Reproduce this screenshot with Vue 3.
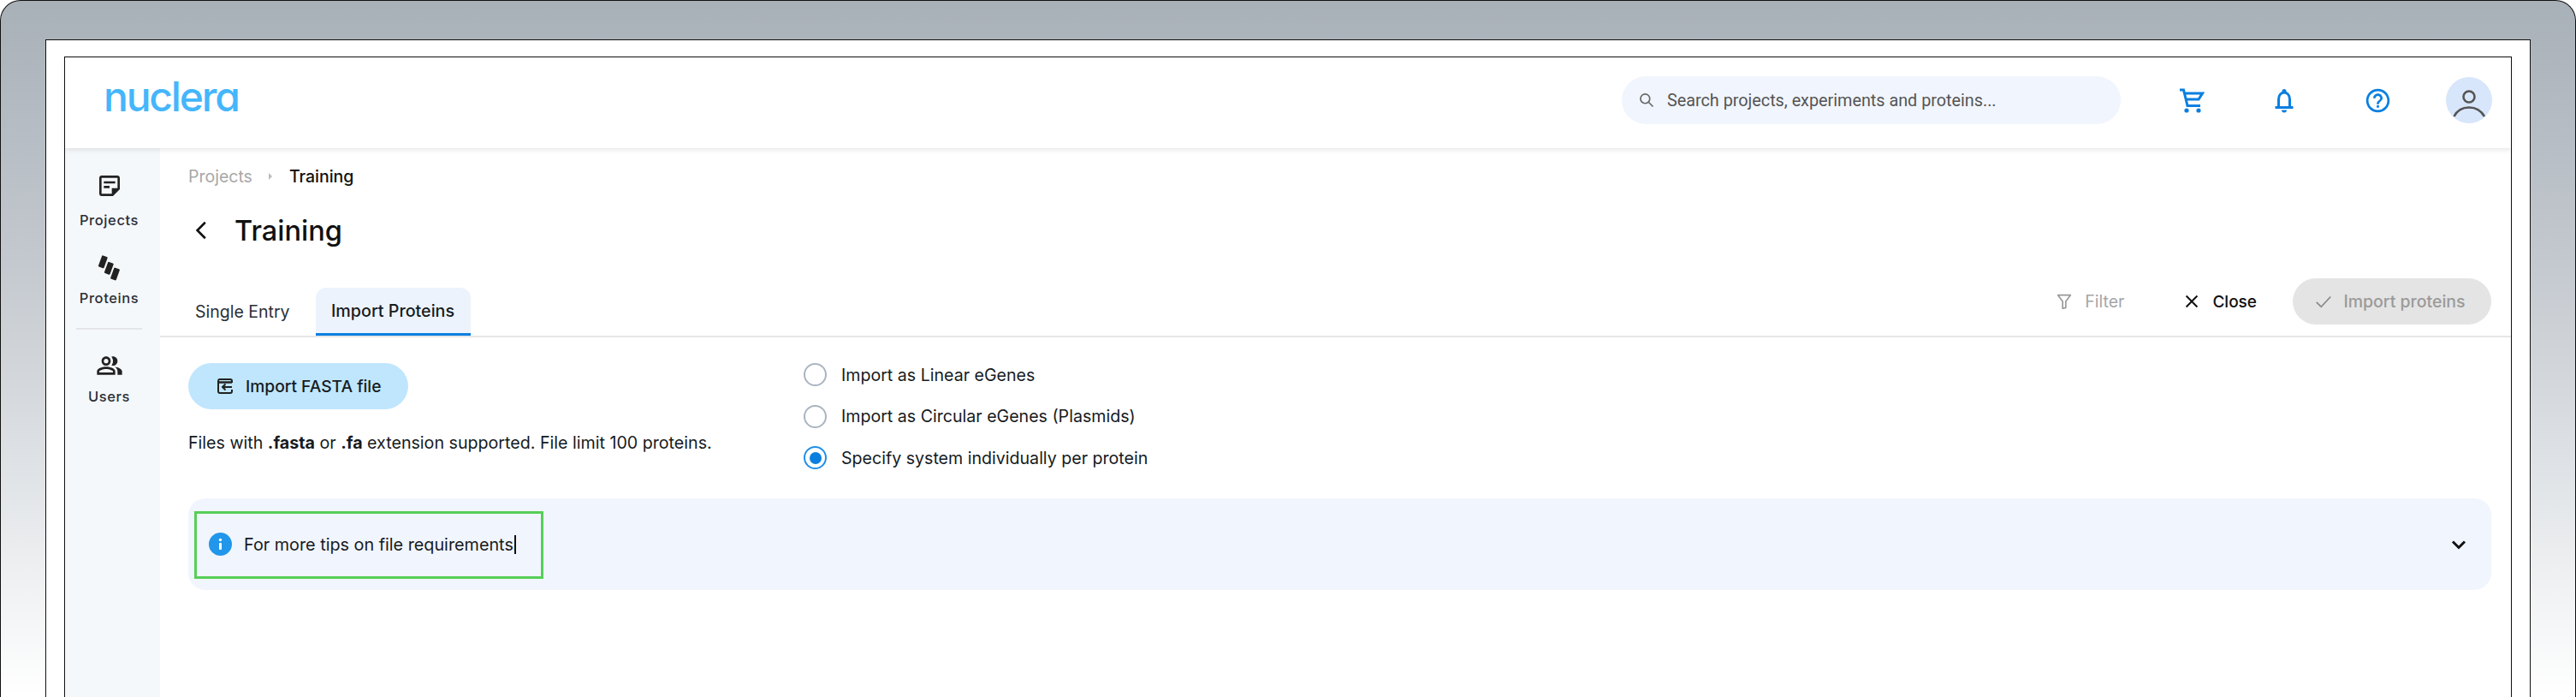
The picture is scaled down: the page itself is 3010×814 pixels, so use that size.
<script setup>
const radios = [
  { label: 'Import as Linear eGenes', on: false },
  { label: 'Import as Circular eGenes (Plasmids)', on: false },
  { label: 'Specify system individually per protein', on: true }
]
</script>

<template>
  <div class="shell">
    <div class="frame">
      <div class="app">
        <header class="topbar">
          <div class="logo">nuclera</div>
          <div class="search">
            <svg class="search-ico" viewBox="0 0 24 24" fill="none" stroke="#666" stroke-width="2"><circle cx="10" cy="10" r="6.5"/><path d="M15 15l6 6"/></svg>
            <span>Search projects, experiments and proteins...</span>
          </div>
          <div class="top-icons">
            <svg class="ti" viewBox="-3 -2.500 32 32" fill="none" stroke="#0a7fe0" stroke-width="3">
              <path d="M0 1.500h4.500L9 20h15M6 5.500h20.500L22 12.500H8"/>
              <circle cx="8" cy="25.500" r="2.600" fill="#0a7fe0" stroke="none"/>
              <circle cx="22" cy="25.500" r="2.600" fill="#0a7fe0" stroke="none"/>
            </svg>
            <svg class="ti" viewBox="-4.500 -2 32 32" fill="none" stroke="#0a7fe0" stroke-width="3">
              <path d="M5 22V13c0-5 3-8 6.500-8s6.500 3 6.500 8v9M1 22.500h21"/>
              <circle cx="11.500" cy="3.500" r="2.500" fill="#0a7fe0" stroke="none"/>
              <path d="M8.500 25.500h6a3 3 0 0 1-6 0z" fill="#0a7fe0" stroke="none"/>
            </svg>
            <svg class="ti help" viewBox="0 0 24 24" fill="#0a7fe0"><path d="M11 18h2v-2h-2v2zm1-16C6.480 2 2 6.480 2 12s4.480 10 10 10 10-4.480 10-10S17.520 2 12 2zm0 18c-4.410 0-8-3.590-8-8s3.590-8 8-8 8 3.590 8 8-3.590 8-8 8zm0-14c-2.210 0-4 1.790-4 4h2c0-1.100.9-2 2-2s2 .9 2 2c0 2-3 1.750-3 5h2c0-2.250 3-2.500 3-5 0-2.210-1.790-4-4-4z"/></svg>
            <div class="avatar">
              <svg viewBox="0 0 54 54" fill="none" stroke="#555" stroke-width="2.600"><circle cx="27" cy="23" r="6.500"/><path d="M9.500 46C13 39 20 35.500 27 35.500S41 39 45 46"/></svg>
            </div>
          </div>
        </header>

        <div class="body">
          <aside class="sidebar">
            <div class="nav-item nav-projects">
              <svg class="nav-ico" viewBox="0 0 24 24" fill="#222"><path d="M19 5v9h-5v5H5V5h14m0-2H5c-1.100 0-2 .9-2 2v14c0 1.100.9 2 2 2h10l6-6V5c0-1.100-.9-2-2-2zm-7 11H7v-2h5v2zm5-4H7V8h10v2z"/></svg>
              <span>Projects</span>
            </div>
            <div class="nav-item nav-proteins">
              <svg class="nav-ico" viewBox="0 0 32 32" fill="#222">
                <rect x="5.800" y="1.800" width="7" height="14" rx="1.200" transform="rotate(20 9.300 8.800)"/>
                <rect x="12.800" y="9.300" width="7" height="14" rx="1.200" transform="rotate(20 16.300 16.300)"/>
                <rect x="20" y="16" width="7" height="14" rx="1.200" transform="rotate(20 23.500 23)"/>
              </svg>
              <span>Proteins</span>
            </div>
            <div class="nav-div"></div>
            <div class="nav-item nav-users">
              <svg class="nav-ico" viewBox="0 0 24 24" fill="#222"><path d="M16.670 13.130C18.040 14.060 19 15.320 19 17v3h4v-3c0-2.180-3.570-3.470-6.330-3.870zM15 12c2.210 0 4-1.790 4-4s-1.790-4-4-4c-.47 0-.91.1-1.330.24C14.500 5.270 15 6.580 15 8s-.5 2.730-1.330 3.760C14.090 11.900 14.530 12 15 12zM9 12c2.210 0 4-1.790 4-4s-1.790-4-4-4-4 1.790-4 4 1.790 4 4 4zm0-6c1.100 0 2 .9 2 2s-.9 2-2 2-2-.9-2-2 .9-2 2-2zM9 13c-2.670 0-8 1.340-8 4v3h16v-3c0-2.660-5.330-4-8-4zm6 5H3v-.99C3.200 16.290 6.300 15 9 15s5.800 1.290 6 2v1z"/></svg>
              <span>Users</span>
            </div>
          </aside>

          <main class="main">
            <nav class="crumbs">
              <span class="crumb-muted">Projects</span>
              <svg class="crumb-sep" viewBox="0 0 6 10" fill="#bbb"><path d="M1 1l4 4-4 4z"/></svg>
              <span class="crumb-cur">Training</span>
            </nav>
            <div class="title-row">
              <svg class="back" viewBox="0 0 24 24" fill="none" stroke="#111" stroke-width="2.400"><path d="M15.500 3.500L7 12l8.500 8.500"/></svg>
              <h1>Training</h1>
            </div>
            <div class="tabbar">
              <div class="tab">Single Entry</div>
              <div class="tab active">Import Proteins</div>
              <div class="actions">
                <div class="act muted">
                  <svg class="act-ico" viewBox="0 0 24 24" fill="none" stroke="#999" stroke-width="1.800" stroke-linejoin="round"><path d="M4 4h16l-6 8v8l-4 1v-9z"/></svg>
                  <span>Filter</span>
                </div>
                <div class="act close">
                  <svg class="act-ico" viewBox="0 0 24 24" fill="none" stroke="#111" stroke-width="2.200"><path d="M5 5l14 14M19 5L5 19"/></svg>
                  <span>Close</span>
                </div>
                <div class="import-btn">
                  <svg class="act-ico" viewBox="0 0 24 24" fill="none" stroke="#888" stroke-width="1.800"><path d="M3 13l6 6L21 6"/></svg>
                  <span>Import proteins</span>
                </div>
              </div>
            </div>

            <section class="form">
              <div class="left-col">
                <button class="fasta-btn" type="button">
                  <svg class="fasta-ico" viewBox="0 0 18 18" fill="none" stroke="#222" stroke-width="2">
                    <path d="M17 5V3a2 2 0 0 0-2-2H3a2 2 0 0 0-2 2v12a2 2 0 0 0 2 2h12a2 2 0 0 0 2-2v-2"/>
                    <path d="M1 4.500h16" stroke-width="2.500"/>
                    <path d="M17 10H6M9.500 6.500L6 10l3.500 3.500"/>
                  </svg>
                  <span>Import FASTA file</span>
                </button>
                <p class="hint">Files with <b>.fasta</b> or <b>.fa</b> extension supported. File limit 100 proteins.</p>
              </div>
              <div class="radios">
                <label v-for="r in radios" :key="r.label" class="radio">
                  <span class="dot" :class="{ on: r.on }"></span>
                  <span>{{ r.label }}</span>
                </label>
              </div>
            </section>

            <section class="tips">
              <div class="tips-mark">
                <svg class="info" viewBox="0 0 27 27"><circle cx="13.500" cy="13.500" r="13.500" fill="#2196ea"/><rect x="12" y="12" width="3" height="8" rx="1" fill="#fff"/><circle cx="13.500" cy="8.500" r="1.700" fill="#fff"/></svg>
                <span class="tips-text">For more tips on file requirements</span><span class="caret"></span>
              </div>
              <svg class="expand" viewBox="0 0 24 24" fill="none" stroke="#111" stroke-width="3"><path d="M5 8.500l7 7 7-7"/></svg>
            </section>
          </main>
        </div>
      </div>
    </div>
  </div>
</template>

<style>
html, body { margin: 0; background: #fff; }
</style>

<style scoped>
.shell {
  box-sizing: border-box;
  width: 3010px;
  height: 814px;
  padding: 45px 52px 0;
  overflow: hidden;
  border: 1px solid #111;
  border-bottom: 0;
  border-radius: 24px 24px 0 0;
  background: linear-gradient(180deg, #a8b0b8 0%, #c4c9cf 38%, #e2e5e8 70%, #ffffff 100%);
  font-family: Inter, "Liberation Sans", sans-serif;
  color: #161b22;
}
.frame {
  box-sizing: border-box;
  height: 100%;
  padding: 19px 21px 0;
  background: #fff;
  border: 1px solid #111;
  border-bottom: 0;
}
.app {
  box-sizing: border-box;
  height: 100%;
  display: flex;
  flex-direction: column;
  border: 1px solid #111;
  border-bottom: 0;
}
.topbar {
  box-sizing: border-box;
  flex: none;
  height: 106px;
  display: flex;
  align-items: center;
  padding: 0 0 6px 45px;
  background: #fff;
  box-shadow: 0 2px 6px rgba(0, 0, 0, .1);
  position: relative;
}
.logo {
  font-size: 48px;
  font-weight: 500;
  line-height: 46px;
  margin-bottom: 9px;
  color: #45b6fb;
  font-feature-settings: "cv11" 1;
  letter-spacing: -2.200px;
  width: 1774px;
  flex: none;
}
.search {
  box-sizing: border-box;
  width: 583px;
  height: 56px;
  flex: none;
  border-radius: 28px;
  background: #f1f5fd;
  display: flex;
  align-items: center;
  gap: 14px;
  padding-left: 19px;
  font: 19.800px Roboto, sans-serif;
  color: #555;
}
.search-ico { width: 20px; height: 20px; flex: none; }
.top-icons {
  display: flex;
  align-items: center;
  margin-left: 66px;
}
.ti { width: 32px; height: 32px; flex: none; margin-right: 77px; }
.ti.help { width: 33px; height: 33px; margin-right: 63px; }
.avatar {
  width: 54px;
  height: 54px;
  border-radius: 50%;
  background: #d8e6fb;
  flex: none;
}
.avatar svg { width: 54px; height: 54px; display: block; }
.body { flex: 1; display: flex; min-height: 0; }
.sidebar {
  box-sizing: border-box;
  flex: none;
  width: 111px;
  background: #f5f8fb;
  display: flex;
  flex-direction: column;
  align-items: center;
  padding: 28px 8px 0 0;
}
.nav-item {
  display: flex;
  flex-direction: column;
  align-items: center;
  font-size: 16.500px;
  line-height: 20px;
  font-weight: 500;
  letter-spacing: .6px;
  color: #2b2f36;
}
.nav-projects { gap: 14px; margin-bottom: 30px; }
.nav-proteins { gap: 9px; }
.nav-users { gap: 10px; }
.nav-ico { width: 32px; height: 32px; }
.nav-div { width: 77px; height: 2px; background: #e3e5e8; margin: 25px 0 26px; flex: none; }
.main { flex: 1; min-width: 0; background: #fff; }
.crumbs {
  display: flex;
  align-items: center;
  height: 22px;
  margin: 22px 0 0 33px;
  font-size: 19.500px;
}
.crumb-muted { color: #a8a8a8; }
.crumb-sep { width: 6px; height: 10px; margin: 0 19px 0 18px; }
.crumb-cur { color: #111; font-weight: 500; }
.title-row {
  display: flex;
  align-items: center;
  height: 44px;
  margin: 30px 0 0 36px;
}
.back { width: 26px; height: 26px; margin-right: 25px; }
h1 { margin: 0; font-size: 32.500px; font-weight: 500; color: #111; }
.tabbar {
  display: flex;
  align-items: flex-end;
  height: 58px;
  margin-top: 43px;
  border-bottom: 2px solid #e6e6e6;
}
.tab {
  height: 56px;
  box-sizing: border-box;
  display: flex;
  align-items: center;
  justify-content: center;
  font-size: 19.500px;
  margin-left: 41px;
  color: #2b2f36;
}
.tab.active {
  margin-left: 30px;
  width: 181px;
  font-size: 19.700px;
  font-weight: 500;
  color: #161b22;
  background: #edf3fc;
  border-radius: 12px 12px 0 0;
  border-bottom: 3px solid #0a7fe0;
}
.actions {
  margin: -9px 23px 0 auto;
  display: flex;
  align-items: center;
  align-self: flex-start;
  height: 54px;
}
.act { display: flex; align-items: center; gap: 13px; font-size: 19.500px; }
.act.muted { color: #a6a6a6; margin-right: 68px; }
.act.close { color: #111; font-weight: 500; font-size: 19px; margin-right: 42px; }
.act-ico { width: 22px; height: 22px; }
.import-btn {
  box-sizing: border-box;
  width: 232px;
  height: 54px;
  border-radius: 27px;
  background: #e4e4e4;
  color: #9a9a9a;
  display: flex;
  align-items: center;
  justify-content: center;
  gap: 12px;
  padding-right: 5px;
  font-size: 19.500px;
  font-weight: 500;
}
.form {
  display: flex;
  margin: 30px 0 0 33px;
  height: 158px;
}
.left-col { width: 719px; flex: none; }
.fasta-btn {
  box-sizing: border-box;
  width: 257px;
  height: 54px;
  border: 0;
  border-radius: 27px;
  background: #c0e6fd;
  display: flex;
  align-items: center;
  gap: 15px;
  padding: 0 0 0 34px;
  font: 500 19.200px Inter, sans-serif;
  color: #161b22;
}
.fasta-ico { width: 18px; height: 18px; flex: none; }
.hint { margin: 27px 0 0; font-size: 19.650px; line-height: 24px; color: #161b22; }
.hint b { font-weight: 700; }
.radios { display: flex; flex-direction: column; gap: 21.500px; }
.radio { display: flex; align-items: center; gap: 17px; height: 27px; font-size: 19.600px; color: #161b22; }
.dot {
  box-sizing: border-box;
  width: 27px;
  height: 27px;
  border-radius: 50%;
  border: 2px solid #aab4c2;
  background: #fff;
  position: relative;
  flex: none;
}
.dot.on { border-color: #1f8fea; }
.dot.on::after {
  content: "";
  position: absolute;
  inset: 4.500px;
  border-radius: 50%;
  background: #0a7fe0;
}
.tips {
  box-sizing: border-box;
  height: 107px;
  margin: 0 23px 0 33px;
  border-radius: 20px;
  background: #f1f5fd;
  display: flex;
  align-items: center;
  justify-content: space-between;
  padding-left: 7px;
  padding-right: 26px;
}
.tips-mark {
  box-sizing: border-box;
  width: 408px;
  height: 79px;
  border: 3px solid #57cf57;
  display: flex;
  align-items: center;
  padding: 0 0 2px 14px;
  font-size: 19.800px;
  margin-top: 2px;
}
.info { width: 27px; height: 27px; margin-right: 14px; flex: none; }
.caret { width: 2px; height: 22px; background: #111; margin-left: 1px; }
.expand { width: 24px; height: 24px; flex: none; }
</style>
